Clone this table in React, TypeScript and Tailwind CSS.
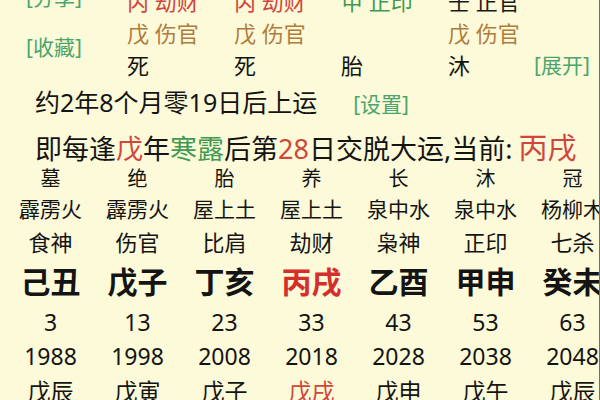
const font = { fontFamily: '"Noto Sans", "Noto Sans CJK SC", sans-serif' };

const pillars = [
  { top: "丙 劫财", topColor: "text-[#d0463c]", mid: "戊 伤官", bottom: "死" },
  { top: "丙 劫财", topColor: "text-[#d0463c]", mid: "戊 伤官", bottom: "死" },
  { top: "甲 正印", topColor: "text-[#3f9b52]", mid: "", bottom: "胎" },
  { top: "壬 正官", topColor: "text-[#1a1a1a]", mid: "戊 伤官", bottom: "沐" },
];

const stages = ["墓", "绝", "胎", "养", "长", "沐", "冠"];
const nayin = ["霹雳火", "霹雳火", "屋上土", "屋上土", "泉中水", "泉中水", "杨柳木"];
const gods = ["食神", "伤官", "比肩", "劫财", "枭神", "正印", "七杀"];
const ganzhi = ["己丑", "戊子", "丁亥", "丙戌", "乙酉", "甲申", "癸未"];
const ages = ["3", "13", "23", "33", "43", "53", "63"];
const years = ["1988", "1998", "2008", "2018", "2028", "2038", "2048"];
const liunian = ["戊辰", "戊寅", "戊子", "戊戌", "戊申", "戊午", "戊辰"];

function Row({ items, className, h, current = 3, currentClass = "" }: { items: string[]; className: string; h: string; current?: number; currentClass?: string }) {
  return (
    <div className={`grid grid-cols-[repeat(7,87px)] items-center ${h}`}>
      {items.map((t, i) => (
        <div key={i} className={`text-center whitespace-nowrap ${className} ${i === current ? currentClass : ""}`}>
          {t}
        </div>
      ))}
    </div>
  );
}

export default function App() {
  return (
    <div className="w-[600px] h-[400px] overflow-hidden bg-[#fcfad8] border-r border-[#6f6f62] text-[#141414]" style={font}>
      {/* pillar details */}
      <div className="grid grid-cols-[127px_107px_107px_107px_86px_1fr] grid-rows-[32px_32px_32px] -mt-[15px] text-[22px] leading-none">
        <div className="pl-[26px] self-center -mt-[8px] text-[21px] text-[#4aa56e]">[分享]</div>
        {pillars.map((p, i) => (
          <div key={i} className={`self-center whitespace-nowrap ${p.topColor}`}>{p.top}</div>
        ))}
        <div />
        <div className="row-span-2 row-start-2 col-start-1 self-center pl-[26px] text-[21px] text-[#4aa56e] -mt-[4px]">[收藏]</div>
        {pillars.map((p, i) => (
          <div key={i} className="row-start-2 self-center whitespace-nowrap text-[#b07c3e]" style={{ gridColumnStart: i + 2 }}>{p.mid}</div>
        ))}
        {pillars.map((p, i) => (
          <div key={i} className="row-start-3 self-center" style={{ gridColumnStart: i + 2 }}>{p.bottom}</div>
        ))}
        <div className="row-start-3 col-start-6 self-center text-[21px] text-[#4aa56e] whitespace-nowrap">[展开]</div>
      </div>

      {/* start luck */}
      <div className="flex items-baseline h-[44px] pt-[9px] pl-[35px] whitespace-nowrap">
        <span className="text-[25px] leading-none">约2年8个月零19日后上运</span>
        <span className="ml-[36px] text-[21px] leading-none text-[#4aa56e]">[设置]</span>
      </div>
      <div className="flex items-baseline h-[42px] pt-[8px] pl-[35px] whitespace-nowrap text-[27px] leading-none">
        即每逢<span className="text-[#d0463c]">戊</span>年<span className="text-[#3f9b52]">寒露</span>后第
        <span className="text-[#d0463c]">28</span>日交脱大运,当前: <span className="ml-[6px] text-[29px] text-[#d0463c]">丙戌</span>
      </div>

      {/* luck pillars */}
      <div className="pl-[7px] leading-none">
        <Row items={stages} className="text-[20px]" h="h-[28px] mt-[-2px]" />
        <Row items={nayin} className="text-[21px]" h="h-[32px]" />
        <Row items={gods} className="text-[22px]" h="h-[34px]" />
        <Row items={ganzhi} className="text-[30px] font-bold" h="h-[46px]" currentClass="text-[#d62e2a]" />
        <Row items={ages} className="text-[23px]" h="h-[34px]" />
        <Row items={years} className="text-[23px]" h="h-[34px]" />
        <Row items={liunian} className="text-[23px]" h="h-[36px]" currentClass="text-[#d0463c]" />
      </div>
    </div>
  );
}
